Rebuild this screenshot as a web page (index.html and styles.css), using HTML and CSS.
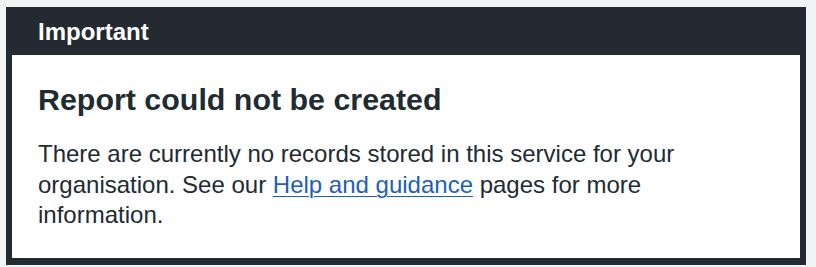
FILE: index.html
```html
<!DOCTYPE html>
<html lang="en">
<head>
<meta charset="utf-8">
<title>Important</title>
<link rel="stylesheet" href="styles.css">
</head>
<body>
<div class="banner" role="region" aria-labelledby="banner-title">
  <div class="banner-header">
    <h2 class="banner-title" id="banner-title">Important</h2>
  </div>
  <div class="banner-content">
    <h3 class="banner-heading">Report could not be created</h3>
    <p class="banner-text">There are currently no records stored in this service for your organisation. See our <a class="banner-link" href="#">Help and guidance</a> pages for more information.</p>
  </div>
</div>
</body>
</html>
```

FILE: styles.css
```css
html, body {
  margin: 0;
  padding: 0;
  background: #f0f4f5;
}
body {
  padding: 7px 10px 0 6px;
  font-family: "Liberation Sans", Arial, sans-serif;
  color: #212b32;
}
.banner {
  background: #232a31;
  border: 6px solid #232a31;
  border-top: 0;
  border-bottom-width: 7px;
  width: 788px;
}
.banner-header {
  padding: 10px 26px 9px 26px;
}
.banner-title {
  margin: 0;
  font-size: 24px;
  line-height: 29px;
  font-weight: 700;
  color: #ffffff;
}
.banner-content {
  background: #ffffff;
  padding: 25px 26px 27px 26px;
}
.banner-heading {
  margin: 0 0 21px 0;
  font-size: 30.4px;
  line-height: 38px;
  font-weight: 700;
  color: #212b32;
}
.banner-text {
  margin: 0;
  max-width: 700px;
  font-size: 24px;
  line-height: 30.5px;
  color: #212b32;
}
.banner-link {
  color: #1d5fb8;
  text-decoration: underline;
  text-underline-offset: 3px;
  text-decoration-thickness: 1px;
}
```
